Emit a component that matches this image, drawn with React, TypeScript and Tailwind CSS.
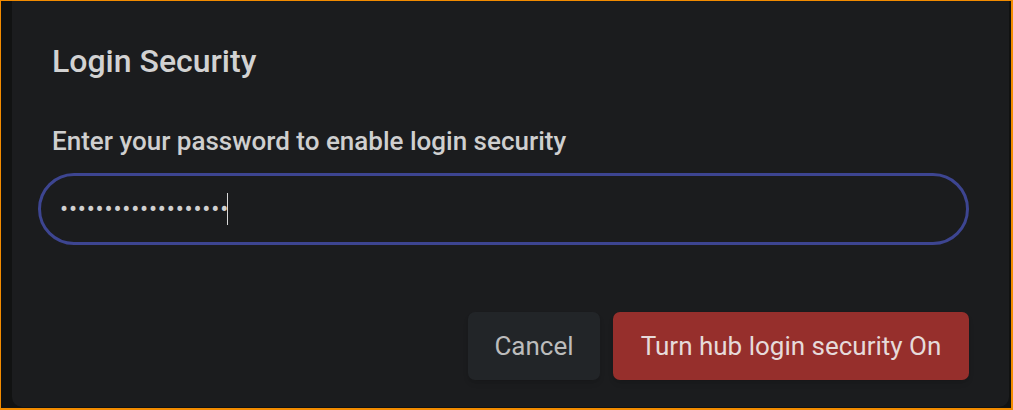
export default function App() {
  return (
    <div
      className="w-[1013px] h-[410px] bg-[#111212] border-[#f28b00] border-t border-l border-r-2 border-b-2 flex overflow-hidden"
      style={{ fontFamily: "Roboto, 'Noto Sans', sans-serif" }}
    >
      <div className="ml-[11px] mr-[2px] mb-[1px] flex-1 bg-[#1b1c1e] rounded-b-[10px] flex flex-col pl-[26px] pr-[40px] pt-[38px]">
        <div className="pl-[14px] text-[32px] leading-[44px] font-medium text-[#d2d2d2]">
          Login Security
        </div>
        <div className="pl-[14px] mt-[42px] text-[26px] leading-[32px] font-medium text-[#cfcfcf]">
          Enter your password to enable login security
        </div>
        <div className="mt-[16px] h-[72px] rounded-full border-[3px] border-[#3d4591] flex items-center pl-[19px]">
          <span className="text-[24px] tracking-[0.8px] text-[#d0d0d0] leading-none">
            •••••••••••••••••••
          </span>
          <span className="w-px h-[32px] bg-[#d8d8d8] -ml-[2px]" />
        </div>
        <div className="mt-[67px] flex justify-end gap-[13px]">
          <button className="h-[68px] w-[132px] rounded-[7px] bg-[#222528] text-[26px] text-[#bcbcbc] shadow-md">
            Cancel
          </button>
          <button className="h-[68px] w-[356px] rounded-[7px] bg-[#962f2c] text-[26px] text-[#e6dada] shadow-md">
            Turn hub login security On
          </button>
        </div>
      </div>
    </div>
  );
}
